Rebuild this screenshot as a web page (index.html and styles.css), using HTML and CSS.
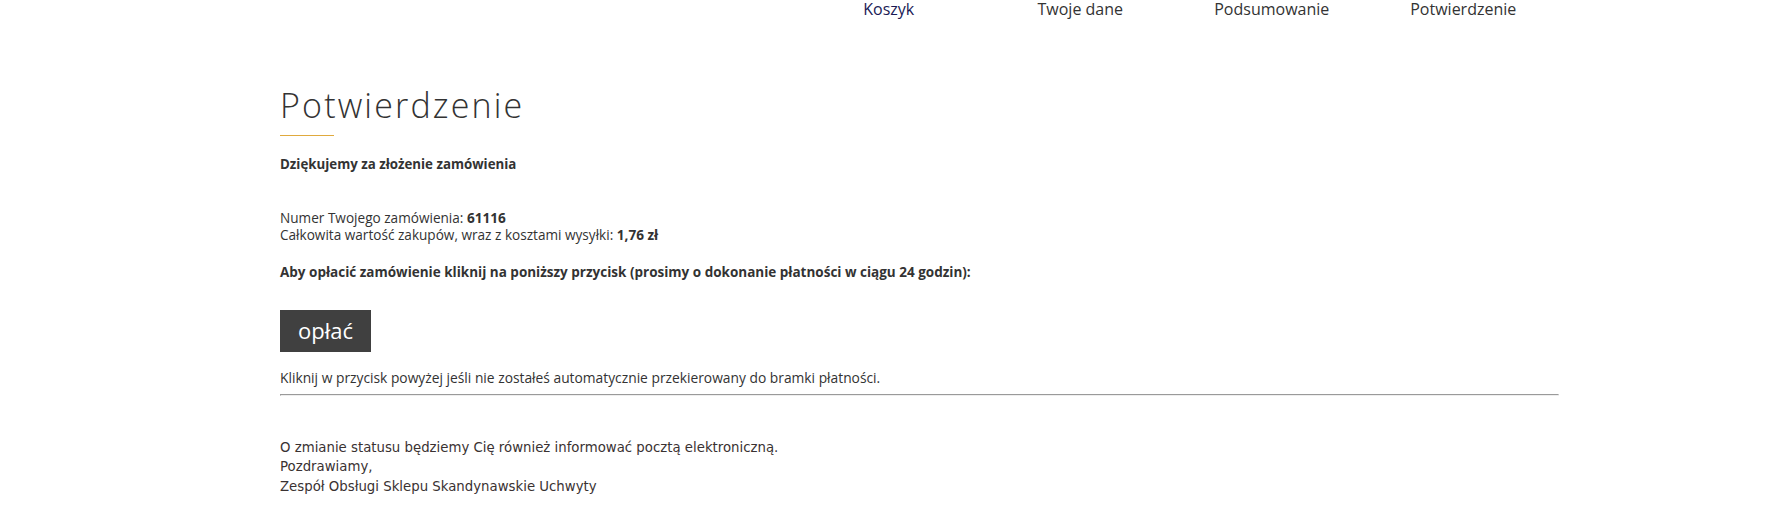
FILE: index.html
```html
<!DOCTYPE html>
<html lang="pl">
<head>
    <meta charset="UTF-8">
    <meta name="viewport" content="width=device-width, initial-scale=1.0">
    <title>Potwierdzenie</title>
    <link rel="stylesheet" href="styles.css">
</head>
<body>
    <div class="page">
        <!-- Order steps -->
        <ul class="steps">
            <li class="step step-link">Koszyk</li>
            <li class="step">Twoje dane</li>
            <li class="step">Podsumowanie</li>
            <li class="step">Potwierdzenie</li>
        </ul>

        <h1 class="page-title">Potwierdzenie</h1>
        <div class="title-line"></div>

        <p class="thanks">Dziękujemy za złożenie zamówienia</p>

        <p class="order-info">
            Numer Twojego zamówienia: <b>61116</b><br>
            Całkowita wartość zakupów, wraz z kosztami wysyłki: <b>1,76 zł</b>
        </p>

        <p class="pay-note">Aby opłacić zamówienie kliknij na poniższy przycisk (prosimy o dokonanie płatności w ciągu 24 godzin):</p>

        <button class="pay-button" type="button">opłać</button>

        <p class="redirect-note">Kliknij w przycisk powyżej jeśli nie zostałeś automatycznie przekierowany do bramki płatności.</p>
        <hr class="divider">

        <!-- Closing message -->
        <p class="closing">
            O zmianie statusu będziemy Cię również informować pocztą elektroniczną.<br>
            Pozdrawiamy,<br>
            Zespół Obsługi Sklepu Skandynawskie Uchwyty
        </p>
    </div>
</body>
</html>
```

FILE: styles.css
```css
/* General page styles */
body {
    margin: 0;
    padding: 0;
    font-family: "Open Sans", "Noto Sans", sans-serif;
    color: #333333;
    background: #ffffff;
}

.page {
    width: 1279px;
    margin-left: 280px;
}

/* Checkout steps */
.steps {
    list-style: none;
    margin: 0;
    padding: 0;
    display: flex;
    justify-content: flex-end;
}

.step {
    width: 191.5px;
    text-align: center;
    font-size: 16px;
    line-height: 19px;
    color: #333333;
}

.step-link {
    color: #1a1a55;
}

/* Title */
.page-title {
    margin: 66px 0 0;
    font-size: 34px;
    line-height: 40px;
    font-weight: 300;
    letter-spacing: 2.15px;
    color: #333333;
}

.title-line {
    width: 54px;
    height: 1px;
    margin-top: 10px;
    background: #e0aa3e;
}

/* Text blocks */
.thanks {
    margin: 19px 0 0;
    font-size: 13.3px;
    line-height: 18px;
    font-weight: 700;
}

.order-info {
    margin: 36px 0 0;
    font-size: 13.6px;
    line-height: 17px;
}

.pay-note {
    margin: 20px 0 0;
    font-size: 13.5px;
    line-height: 18px;
    font-weight: 700;
}

/* Pay button */
.pay-button {
    display: block;
    width: 91px;
    height: 42px;
    margin-top: 29px;
    padding: 0 0 2px;
    border: none;
    background: #404040;
    color: #ffffff;
    font-family: inherit;
    font-size: 22px;
}

.redirect-note {
    margin: 17px 0 0;
    font-size: 13.8px;
    line-height: 18px;
}

.divider {
    margin: 7px 0 0;
}

/* Closing message */
.closing {
    margin: 42px 0 0;
    font-family: "DejaVu Sans", Verdana, sans-serif;
    font-size: 13.3px;
    line-height: 19.4px;
    color: #3a3232;
}
```
